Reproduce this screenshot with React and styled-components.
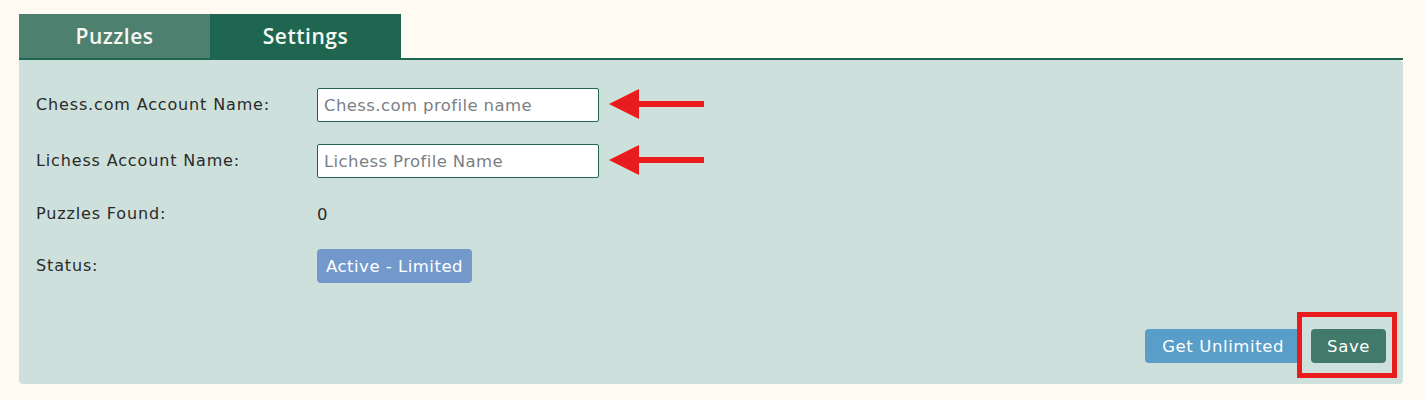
import React from 'react';
import styled, { createGlobalStyle } from 'styled-components';

const Global = createGlobalStyle`
  body {
    margin: 0;
    background: #fffbf3;
    font-family: "DejaVu Sans", "Open Sans", sans-serif;
    color: #2b2b2b;
  }
`;

const Page = styled.div`
  padding: 14px 22px 16px 19px;
`;

const TabBar = styled.div`
  display: flex;
  border-bottom: 2px solid #1f6651;
`;

const Tab = styled.div`
  width: 191px;
  height: 44px;
  display: flex;
  align-items: center;
  justify-content: center;
  background: ${p => (p.$active ? '#1f6651' : '#4e8070')};
  color: #f7f7f2;
  font-family: "Open Sans", "DejaVu Sans", sans-serif;
  font-size: 21px;
  font-weight: 600;
  letter-spacing: 0.5px;
`;

const Panel = styled.div`
  background: #cde0db;
  border-radius: 0 4px 4px 4px;
  padding: 28px 17px 21px 17px;
  height: 324px;
  box-sizing: border-box;
  display: flex;
  flex-direction: column;
`;

const Row = styled.div`
  display: flex;
  align-items: center;
  height: 34px;
  margin-bottom: ${p => p.$gap || 22}px;
`;

const Label = styled.div`
  width: 281px;
  margin-top: -2px;
  font-size: 16px;
  letter-spacing: 0.85px;
  color: #2a2a2a;
`;

const Value = styled.div`
  font-size: 16.5px;
  color: #2a2a2a;
`;

const Input = styled.input`
  width: 282px;
  height: 34px;
  box-sizing: border-box;
  border: 1px solid #1f6651;
  border-radius: 2px;
  background: #fff;
  padding: 0 6px;
  font-family: inherit;
  font-size: 16.5px;
  letter-spacing: 0.4px;
  outline: none;
  &::placeholder {
    color: #7a7f86;
  }
`;

const Badge = styled.span`
  display: inline-flex;
  align-items: center;
  height: 34px;
  padding: 0 9px;
  border-radius: 4px;
  background: #7399cc;
  color: #fff;
  font-size: 16.5px;
  letter-spacing: 0.5px;
`;

const Arrow = styled.svg`
  margin-left: 10px;
  flex: none;
`;

const Footer = styled.div`
  margin-top: auto;
  display: flex;
  justify-content: flex-end;
  gap: 10px;
`;

const Button = styled.button`
  height: 34px;
  border: none;
  border-radius: 4px;
  padding: 0 ${p => (p.$variant === 'save' ? 16 : 17)}px;
  font-family: inherit;
  font-size: 16.5px;
  letter-spacing: 0.6px;
  color: #fff;
  background: ${p => (p.$variant === 'save' ? '#41796a' : '#599ec8')};
`;

const Highlight = styled.div`
  position: relative;
  &::after {
    content: '';
    position: absolute;
    top: -17px;
    bottom: -15px;
    left: -14px;
    right: -11px;
    border: 5px solid #e81c1c;
    pointer-events: none;
  }
`;

const RedArrow = () => (
  <Arrow width="96" height="32" viewBox="0 0 96 32">
    <polygon points="0,15 30,0 30,12 95,12 95,18 30,18 30,30" fill="#e81c1c" />
  </Arrow>
);

export default function App() {
  return (
    <Page>
      <Global />
      <TabBar>
        <Tab>Puzzles</Tab>
        <Tab $active>Settings</Tab>
      </TabBar>
      <Panel>
        <Row>
          <Label>Chess.com Account Name:</Label>
          <Input placeholder="Chess.com profile name" />
          <RedArrow />
        </Row>
        <Row $gap={19}>
          <Label>Lichess Account Name:</Label>
          <Input placeholder="Lichess Profile Name" />
          <RedArrow />
        </Row>
        <Row $gap={18}>
          <Label>Puzzles Found:</Label>
          <Value>0</Value>
        </Row>
        <Row>
          <Label>Status:</Label>
          <Badge>Active - Limited</Badge>
        </Row>
        <Footer>
          <Button>Get Unlimited</Button>
          <Highlight>
            <Button $variant="save">Save</Button>
          </Highlight>
        </Footer>
      </Panel>
    </Page>
  );
}
